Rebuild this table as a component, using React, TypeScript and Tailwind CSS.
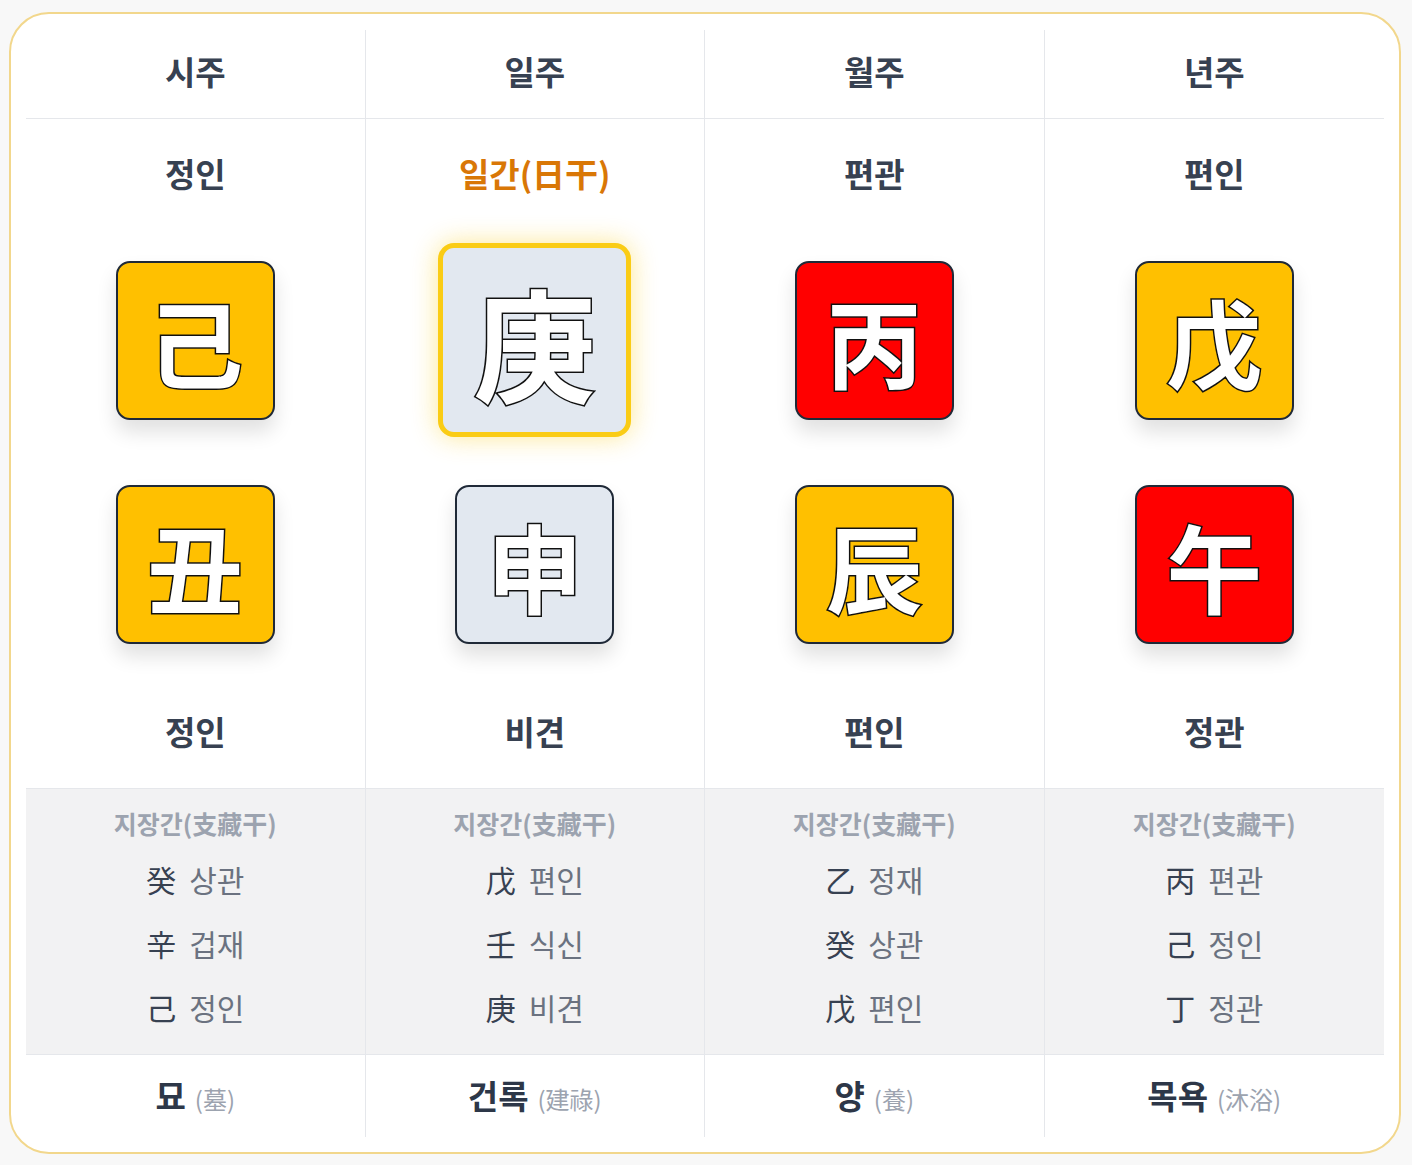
import React from "react";

type Tone = "earth" | "fire" | "metal";

type Pillar = {
  title: string;
  topGod: string;
  stem: string;
  stemTone: Tone;
  branch: string;
  branchTone: Tone;
  bottomGod: string;
  hidden: [string, string][];
  stage: string;
  stageHanja: string;
  isDay?: boolean;
};

const pillars: Pillar[] = [
  {
    title: "시주",
    topGod: "정인",
    stem: "己",
    stemTone: "earth",
    branch: "丑",
    branchTone: "earth",
    bottomGod: "정인",
    hidden: [
      ["癸", "상관"],
      ["辛", "겁재"],
      ["己", "정인"],
    ],
    stage: "묘",
    stageHanja: "(墓)",
  },
  {
    title: "일주",
    topGod: "일간(日干)",
    stem: "庚",
    stemTone: "metal",
    branch: "申",
    branchTone: "metal",
    bottomGod: "비견",
    hidden: [
      ["戊", "편인"],
      ["壬", "식신"],
      ["庚", "비견"],
    ],
    stage: "건록",
    stageHanja: "(建祿)",
    isDay: true,
  },
  {
    title: "월주",
    topGod: "편관",
    stem: "丙",
    stemTone: "fire",
    branch: "辰",
    branchTone: "earth",
    bottomGod: "편인",
    hidden: [
      ["乙", "정재"],
      ["癸", "상관"],
      ["戊", "편인"],
    ],
    stage: "양",
    stageHanja: "(養)",
  },
  {
    title: "년주",
    topGod: "편인",
    stem: "戊",
    stemTone: "earth",
    branch: "午",
    branchTone: "fire",
    bottomGod: "정관",
    hidden: [
      ["丙", "편관"],
      ["己", "정인"],
      ["丁", "정관"],
    ],
    stage: "목욕",
    stageHanja: "(沐浴)",
  },
];

const toneBg: Record<Tone, string> = {
  earth: "bg-[#ffc000]",
  fire: "bg-[#ff0000]",
  metal: "bg-[#e2e8f0]",
};

const glyph =
  "font-bold leading-none text-white [-webkit-text-stroke:3px_#111] [paint-order:stroke_fill]";

function CharBox({ char, tone }: { char: string; tone: Tone }) {
  return (
    <div
      className={`flex h-[159px] w-[159px] items-center justify-center rounded-[14px] border-2 border-[#1f2937] shadow-[0_12px_20px_rgba(0,0,0,0.12)] ${toneBg[tone]}`}
    >
      <span className={`text-[96px] ${glyph}`}>{char}</span>
    </div>
  );
}

function DayBox({ char }: { char: string }) {
  return (
    <div className="flex h-[194px] w-[193px] items-center justify-center rounded-[16px] border-[5px] border-[#facc15] bg-[#e2e8f0] shadow-[0_0_26px_rgba(250,204,21,0.45)]">
      <span className={`text-[122px] ${glyph}`}>{char}</span>
    </div>
  );
}

const cellBorder = (i: number) => (i < 3 ? "border-r border-[#e5e7eb]" : "");

export default function App() {
  return (
    <div
      className="min-h-[1165px] bg-[#f8f8f8] pl-[9px] pt-[12px]"
      style={{ fontFamily: '"Noto Sans CJK KR", "Noto Sans", sans-serif' }}
    >
      <div className="w-[1392px] rounded-[40px] border-2 border-[#f2d78c] bg-white px-[15px] pb-[15px] pt-[16px]">
        {/* header */}
        <div className="grid grid-cols-4 border-b border-[#e5e7eb]">
          {pillars.map((p, i) => (
            <div
              key={p.title}
              className={`flex h-[88px] items-center justify-center pb-[4px] text-[33px] font-bold text-[#374151] ${cellBorder(i)}`}
            >
              {p.title}
            </div>
          ))}
        </div>

        {/* stems & branches */}
        <div className="grid grid-cols-4 border-b border-[#e5e7eb]">
          {pillars.map((p, i) => (
            <div
              key={p.title}
              className={`flex flex-col items-center pb-[37px] pt-[34px] ${cellBorder(i)}`}
            >
              <div
                className={`h-[40px] text-[33px] font-bold leading-[40px] ${
                  p.isDay ? "text-[#d97706]" : "text-[#374151]"
                }`}
              >
                {p.topGod}
              </div>
              <div className="mt-[47px] flex h-[200px] items-center justify-center">
                {p.isDay ? <DayBox char={p.stem} /> : <CharBox char={p.stem} tone={p.stemTone} />}
              </div>
              <div className="mt-[45px]">
                <CharBox char={p.branch} tone={p.branchTone} />
              </div>
              <div className="mt-[67px] h-[40px] text-[33px] font-bold leading-[40px] text-[#374151]">
                {p.bottomGod}
              </div>
            </div>
          ))}
        </div>

        {/* hidden stems */}
        <div className="grid grid-cols-4 border-b border-[#e5e7eb] bg-[#f2f2f3]">
          {pillars.map((p, i) => (
            <div
              key={p.title}
              className={`flex flex-col items-center pb-[15px] pt-[18px] ${cellBorder(i)}`}
            >
              <div className="h-[32px] text-[25px] font-bold leading-[32px] text-[#9ca3af]">
                지장간(支藏干)
              </div>
              <div className="mt-[8px] flex flex-col">
                {p.hidden.map(([h, g]) => (
                  <div key={h + g} className="flex h-[64px] items-center gap-[13px] text-[30px]">
                    <span className="text-[#374151]">{h}</span>
                    <span className="text-[#6b7280]">{g}</span>
                  </div>
                ))}
              </div>
            </div>
          ))}
        </div>

        {/* twelve stages */}
        <div className="grid grid-cols-4">
          {pillars.map((p, i) => (
            <div
              key={p.title}
              className={`flex h-[82px] items-center justify-center gap-[9px] ${cellBorder(i)}`}
            >
              <span className="text-[33px] font-bold text-[#2d3748]">{p.stage}</span>
              <span className="mt-[6px] text-[24px] text-[#9ca3af]">{p.stageHanja}</span>
            </div>
          ))}
        </div>
      </div>
    </div>
  );
}
